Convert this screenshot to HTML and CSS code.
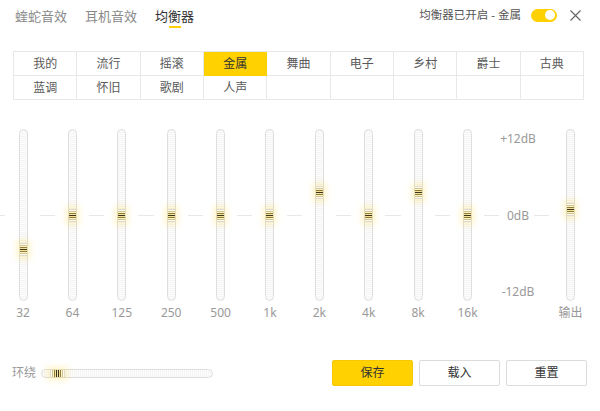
FILE: index.html
```html
<!DOCTYPE html>
<html lang="zh-CN">
<head>
<meta charset="utf-8">
<title>均衡器</title>
<link rel="stylesheet" href="styles.css">
</head>
<body>
<div class="app">
  <header class="header">
    <nav class="tabs">
      <span class="tab">蝰蛇音效</span>
      <span class="tab">耳机音效</span>
      <span class="tab active">均衡器</span>
    </nav>
    <div class="status">
      <span class="status-text">均衡器已开启 - 金属</span>
      <span class="toggle"><span class="knob"></span></span>
      <svg class="close" width="11" height="11" viewBox="0 0 11 11"><path d="M0.5 0.5 L10.5 10.5 M10.5 0.5 L0.5 10.5" stroke="#666" stroke-width="1.2" fill="none"/></svg>
    </div>
  </header>

  <div class="presets">
    <span class="preset">我的</span>
    <span class="preset">流行</span>
    <span class="preset">摇滚</span>
    <span class="preset selected">金属</span>
    <span class="preset">舞曲</span>
    <span class="preset">电子</span>
    <span class="preset">乡村</span>
    <span class="preset">爵士</span>
    <span class="preset">古典</span>
    <span class="preset">蓝调</span>
    <span class="preset">怀旧</span>
    <span class="preset">歌剧</span>
    <span class="preset">人声</span>
    <span class="preset"></span>
    <span class="preset"></span>
    <span class="preset"></span>
    <span class="preset"></span>
    <span class="preset"></span>
  </div>

  <section class="eq">
    <div class="bands">
      <div class="band"><div class="track"><div class="thumb" style="top:113px"></div></div><span class="band-label">32</span></div>
      <div class="band"><div class="track"><div class="thumb" style="top:79px"></div></div><span class="band-label">64</span></div>
      <div class="band"><div class="track"><div class="thumb" style="top:79px"></div></div><span class="band-label">125</span></div>
      <div class="band"><div class="track"><div class="thumb" style="top:79px"></div></div><span class="band-label">250</span></div>
      <div class="band"><div class="track"><div class="thumb" style="top:79px"></div></div><span class="band-label">500</span></div>
      <div class="band"><div class="track"><div class="thumb" style="top:79px"></div></div><span class="band-label">1k</span></div>
      <div class="band"><div class="track"><div class="thumb" style="top:56px"></div></div><span class="band-label">2k</span></div>
      <div class="band"><div class="track"><div class="thumb" style="top:79px"></div></div><span class="band-label">4k</span></div>
      <div class="band"><div class="track"><div class="thumb" style="top:56px"></div></div><span class="band-label">8k</span></div>
      <div class="band"><div class="track"><div class="thumb" style="top:79px"></div></div><span class="band-label">16k</span></div>
    </div>
    <div class="scale">
      <span>+12dB</span>
      <span>0dB</span>
      <span>-12dB</span>
    </div>
    <div class="band output"><div class="track"><div class="thumb" style="top:73px"></div></div><span class="band-label">输出</span></div>
  </section>

  <footer class="footer">
    <div class="surround">
      <span class="surround-label">环绕</span>
      <div class="htrack"><div class="hthumb"></div></div>
    </div>
    <div class="buttons">
      <button class="btn primary">保存</button>
      <button class="btn">载入</button>
      <button class="btn">重置</button>
    </div>
  </footer>
</div>
</body>
</html>
```
FILE: styles.css
```css
* { box-sizing: border-box; }

html, body {
  margin: 0;
  padding: 0;
  background: #fff;
}

.app {
  width: 600px;
  height: 411px;
  overflow: hidden;
  font-family: "Noto Sans", "Noto Sans CJK SC", sans-serif;
  font-size: 12px;
  color: #333;
}

/* header */
.header {
  height: 30px;
  display: flex;
  align-items: center;
  justify-content: space-between;
  padding: 0 19px 0 15px;
}

.tabs {
  display: flex;
  gap: 18px;
  padding-top: 2px;
}

.tab {
  font-size: 13px;
  line-height: 18px;
  color: #8a8a8a;
  position: relative;
}

.tab.active {
  color: #333;
}

.tab.active::after {
  content: "";
  position: absolute;
  left: 50%;
  margin-left: -6px;
  bottom: -3px;
  width: 12px;
  height: 2px;
  background: #ffd100;
}

.status {
  display: flex;
  align-items: center;
}

.status-text {
  font-size: 11.5px;
  line-height: 16px;
  color: #555;
}

.toggle {
  width: 26px;
  height: 13px;
  border-radius: 7px;
  background: #ffd100;
  margin-left: 10px;
  display: flex;
  align-items: center;
  justify-content: flex-end;
  padding-right: 2px;
}

.knob {
  width: 10px;
  height: 10px;
  border-radius: 50%;
  background: #fff;
}

.close {
  margin-left: 13px;
  display: block;
}

/* presets */
.presets {
  margin: 21px 0 0 13px;
  width: 571px;
  display: grid;
  grid-template-columns: repeat(9, 1fr);
  border-top: 1px solid #e8e8e8;
  border-left: 1px solid #e8e8e8;
}

.preset {
  height: 24px;
  border-right: 1px solid #e8e8e8;
  border-bottom: 1px solid #e8e8e8;
  display: flex;
  align-items: center;
  justify-content: center;
  font-size: 12px;
  line-height: 16px;
  color: #5a5a5a;
}

.preset.selected {
  background: #ffd100;
  border-color: #ffd100;
  color: #333;
}

/* eq */
.eq {
  display: flex;
  padding: 29px 0 0 18.5px;
  height: 220px;
  background-image: repeating-linear-gradient(to right, #e8e8e8 0 5.3px, transparent 5.3px 39.7px, #e8e8e8 39.7px 49.4px);
  background-size: 556px 1px;
  background-position: 0 115px;
  background-repeat: no-repeat;
}

.bands {
  display: flex;
  gap: 40.4px;
}

.band {
  width: 9px;
  display: flex;
  flex-direction: column;
  align-items: center;
}

.track {
  position: relative;
  width: 9px;
  height: 172px;
  border: 1px solid #dedede;
  border-radius: 5px;
  background: repeating-linear-gradient(to bottom, #f4f4f4 0 1px, #fdfdfd 1px 2px);
}

.thumb {
  position: absolute;
  left: 0;
  width: 7px;
  height: 13px;
  background: linear-gradient(to bottom,
    #dedad0 0 1px, #fffbe8 1px 2px, #cfc497 2px 3px, #fff3bf 3px 4px,
    #8e7d3a 4px 5px, #f3e29a 5px 6px, #3b3420 6px 7px, #f3e29a 7px 8px,
    #8e7d3a 8px 9px, #fff3bf 9px 10px, #cfc497 10px 11px, #fffbe8 11px 12px,
    #dedad0 12px 13px);
  box-shadow: 0 0 6px 3px rgba(255, 214, 40, 0.26);
}

.band-label {
  margin-top: 5px;
  font-size: 12px;
  line-height: 14px;
  color: #999;
  white-space: nowrap;
}

.scale {
  width: 40px;
  margin-left: 26px;
  height: 172px;
  padding: 3px 0 2px;
  display: flex;
  flex-direction: column;
  justify-content: space-between;
  align-items: center;
  font-size: 12px;
  line-height: 14px;
  color: #999;
}

.band.output {
  margin-left: 28px;
}

/* footer */
.footer {
  margin-top: 40px;
  height: 26px;
  display: flex;
  align-items: center;
  justify-content: space-between;
  padding: 0 13px 0 12px;
}

.surround {
  display: flex;
  align-items: center;
}

.surround-label {
  font-size: 12px;
  line-height: 14px;
  color: #999;
}

.htrack {
  position: relative;
  margin-left: 5px;
  width: 172px;
  height: 9px;
  border: 1px solid #dedede;
  border-radius: 5px;
  background: repeating-linear-gradient(to right, #f4f4f4 0 1px, #fdfdfd 1px 2px);
}

.hthumb {
  position: absolute;
  top: 0;
  left: 8px;
  width: 15px;
  height: 7px;
  background: linear-gradient(to right,
    #dedad0 0 1px, #fffbe8 1px 2px, #cfc497 2px 3px, #fff3bf 3px 4px,
    #8e7d3a 4px 5px, #f3e29a 5px 6px, #3b3420 6px 7px, #f3e29a 7px 8px,
    #3b3420 8px 9px, #f3e29a 9px 10px, #8e7d3a 10px 11px, #fff3bf 11px 12px,
    #cfc497 12px 13px, #fffbe8 13px 14px, #dedad0 14px 15px);
  box-shadow: 0 0 6px 3px rgba(255, 214, 40, 0.26);
}

.buttons {
  display: flex;
  gap: 6px;
}

.btn {
  width: 81px;
  height: 26px;
  border: 1px solid #dcdcdc;
  border-radius: 2px;
  background: #fff;
  font-family: inherit;
  font-size: 12px;
  line-height: 16px;
  color: #333;
  padding: 0;
}

.btn.primary {
  background: #ffd100;
  border-color: #f5c800;
}
```
